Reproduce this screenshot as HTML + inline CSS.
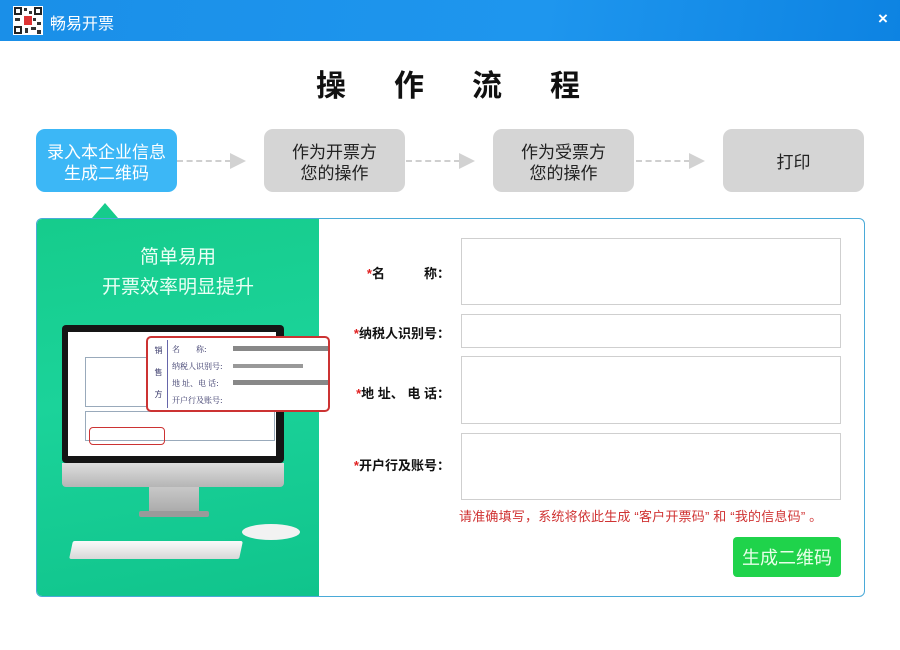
<!DOCTYPE html>
<html><head><meta charset="utf-8">
<style>
*{margin:0;padding:0;box-sizing:border-box}
body{width:900px;height:650px;background:#fff;position:relative;overflow:hidden;font-family:"Liberation Sans","Noto Sans CJK SC",sans-serif}
.abs{position:absolute}
.bar{left:0;top:0;width:900px;height:41px;background:linear-gradient(100deg,#1a8fe8 0%,#1e96ee 60%,#0d83e2 100%)}
.title{left:316px;top:61px;font-size:30px;font-weight:bold;color:#111;letter-spacing:48px;font-family:"Noto Sans CJK SC",sans-serif;white-space:nowrap}
.step{width:141px;height:63px;border-radius:9px;background:#d5d5d5;color:#222;font-size:17px;line-height:21px;text-align:center;display:flex;align-items:center;justify-content:center;font-family:"Noto Sans CJK SC",sans-serif}
.arrow{height:2px;border-top:2px dashed #cfcfcf}
.tri{width:0;height:0;border-top:8px solid transparent;border-bottom:8px solid transparent;border-left:16px solid #d2d2d2}
.panel{left:36px;top:218px;width:829px;height:379px;border:1.5px solid #4aaad8;border-radius:6px;overflow:hidden}
.green{left:0;top:0;width:282px;height:100%;background:linear-gradient(170deg,#16cc8c 0%,#1bd39a 45%,#10c48c 100%)}
.inp{border:1px solid #cfcfcf;background:#fff}
.lbl{font-size:13px;font-weight:bold;color:#111;text-align:right;width:120px}
.lbl i{color:#e02020;font-style:normal}
</style></head><body>
<div class="abs bar"></div>
<svg class="abs" style="left:13px;top:6px" width="30" height="29" viewBox="0 0 30 29">
<rect width="30" height="29" fill="#fff"/>
<rect x="1" y="1" width="8" height="8" fill="#222"/><rect x="3" y="3" width="4" height="4" fill="#fff"/>
<rect x="21" y="1" width="8" height="8" fill="#222"/><rect x="23" y="3" width="4" height="4" fill="#fff"/>
<rect x="1" y="20" width="8" height="8" fill="#222"/><rect x="3" y="22" width="4" height="4" fill="#fff"/>
<rect x="11" y="2" width="3" height="3" fill="#333"/><rect x="16" y="5" width="3" height="3" fill="#333"/>
<rect x="11" y="10" width="8" height="9" fill="#d33"/><rect x="20" y="12" width="3" height="3" fill="#333"/>
<rect x="24" y="16" width="4" height="3" fill="#333"/><rect x="12" y="22" width="3" height="5" fill="#333"/>
<rect x="18" y="21" width="5" height="3" fill="#333"/><rect x="24" y="24" width="4" height="4" fill="#333"/>
<rect x="2" y="12" width="5" height="3" fill="#333"/>
</svg>
<div class="abs" style="left:50px;top:10px;color:#fff;font-size:16px;font-family:'Noto Sans CJK SC',sans-serif">畅易开票</div>
<div class="abs" style="left:878px;top:9px;color:#fff;font-size:17px;font-weight:bold">×</div>

<div class="abs title">操作流程</div>

<div class="abs step" style="left:36px;top:129px;background:#3cb7f6;color:#fff">录入本企业信息<br>生成二维码</div>
<div class="abs step" style="left:264px;top:129px">作为开票方<br>您的操作</div>
<div class="abs step" style="left:493px;top:129px">作为受票方<br>您的操作</div>
<div class="abs step" style="left:723px;top:129px">打印</div>
<div class="abs arrow" style="left:177px;top:160px;width:54px"></div><div class="abs tri" style="left:230px;top:153px"></div>
<div class="abs arrow" style="left:406px;top:160px;width:54px"></div><div class="abs tri" style="left:459px;top:153px"></div>
<div class="abs arrow" style="left:636px;top:160px;width:54px"></div><div class="abs tri" style="left:689px;top:153px"></div>

<div class="abs panel">
 <div class="abs green"></div>
 <div class="abs" style="left:0;top:22px;width:282px;text-align:center;color:#eafff5;font-size:19px;line-height:30px;font-family:'Noto Sans CJK SC',sans-serif">简单易用<br>开票效率明显提升</div>
 <div class="abs" style="left:25px;top:106px;width:222px;height:138px;background:#151515;border-radius:4px"></div>
 <div class="abs" style="left:31px;top:113px;width:208px;height:124px;background:#fff"></div>
 <div class="abs" style="left:25px;top:244px;width:222px;height:24px;background:linear-gradient(#dedede,#b5b5b5);border-radius:0 0 4px 4px"></div>
 <div class="abs" style="left:112px;top:268px;width:50px;height:27px;background:linear-gradient(#c8c8c8,#a8a8a8)"></div>
 <div class="abs" style="left:102px;top:292px;width:70px;height:6px;background:#9a9a9a;border-radius:2px"></div>
 <div class="abs" style="left:34px;top:322px;width:170px;height:18px;background:linear-gradient(#fafafa,#d8d8d8);transform:skewX(-12deg);border-radius:2px"></div>
 <div class="abs" style="left:205px;top:305px;width:58px;height:16px;background:#f2f2f2;border-radius:50%"></div>
 <div class="abs" style="left:48px;top:138px;width:90px;height:50px;border:1px solid #9ab"></div>
 <div class="abs" style="left:48px;top:192px;width:190px;height:30px;border:1px solid #9ab"></div>
 <div class="abs" style="left:52px;top:208px;width:76px;height:18px;border:1.5px solid #c33;border-radius:4px"></div>
 <div class="abs" style="left:109px;top:117px;width:184px;height:76px;background:#fff;border:2px solid #c33;border-radius:5px"></div>
 <div class="abs" style="left:113px;top:121px;width:18px;height:68px;border-right:1px solid #66a;color:#336;font-size:8px;line-height:22px;text-align:center">销<br>售<br>方</div>
 <div class="abs" style="left:135px;top:122px;color:#336;font-size:8px;line-height:17px;font-family:'Noto Serif CJK SC',serif">名　　称:<br>纳税人识别号:<br>地 址、电 话:<br>开户行及账号:</div>
 <div class="abs" style="left:196px;top:127px;width:95px;height:5px;background:#888"></div>
 <div class="abs" style="left:196px;top:145px;width:70px;height:4px;background:#999"></div>
 <div class="abs" style="left:196px;top:161px;width:95px;height:5px;background:#888"></div>
</div>
<div class="abs" style="left:92px;top:203px;width:0;height:0;border-left:13px solid transparent;border-right:13px solid transparent;border-bottom:15px solid #16cc8c"></div>

<div class="abs lbl" style="left:330px;top:263px"><i>*</i>名&emsp;&emsp;&emsp;称：</div>
<div class="abs lbl" style="left:330px;top:323px"><i>*</i>纳税人识别号：</div>
<div class="abs lbl" style="left:330px;top:383px"><i>*</i>地 址、 电 话：</div>
<div class="abs lbl" style="left:330px;top:455px"><i>*</i>开户行及账号：</div>
<div class="abs inp" style="left:461px;top:238px;width:380px;height:67px"></div>
<div class="abs inp" style="left:461px;top:314px;width:380px;height:34px"></div>
<div class="abs inp" style="left:461px;top:356px;width:380px;height:68px"></div>
<div class="abs inp" style="left:461px;top:433px;width:380px;height:67px"></div>
<div class="abs" style="left:459px;top:506px;color:#d03333;font-size:13px;white-space:nowrap;letter-spacing:0.2px">请准确填写，系统将依此生成 “客户开票码” 和 “我的信息码” 。</div>
<div class="abs" style="left:733px;top:537px;width:108px;height:40px;background:#1fd34b;border-radius:4px;color:#e8ffe8;font-size:18px;line-height:40px;text-align:center;font-family:'Noto Sans CJK SC',sans-serif">生成二维码</div>
</body></html>
